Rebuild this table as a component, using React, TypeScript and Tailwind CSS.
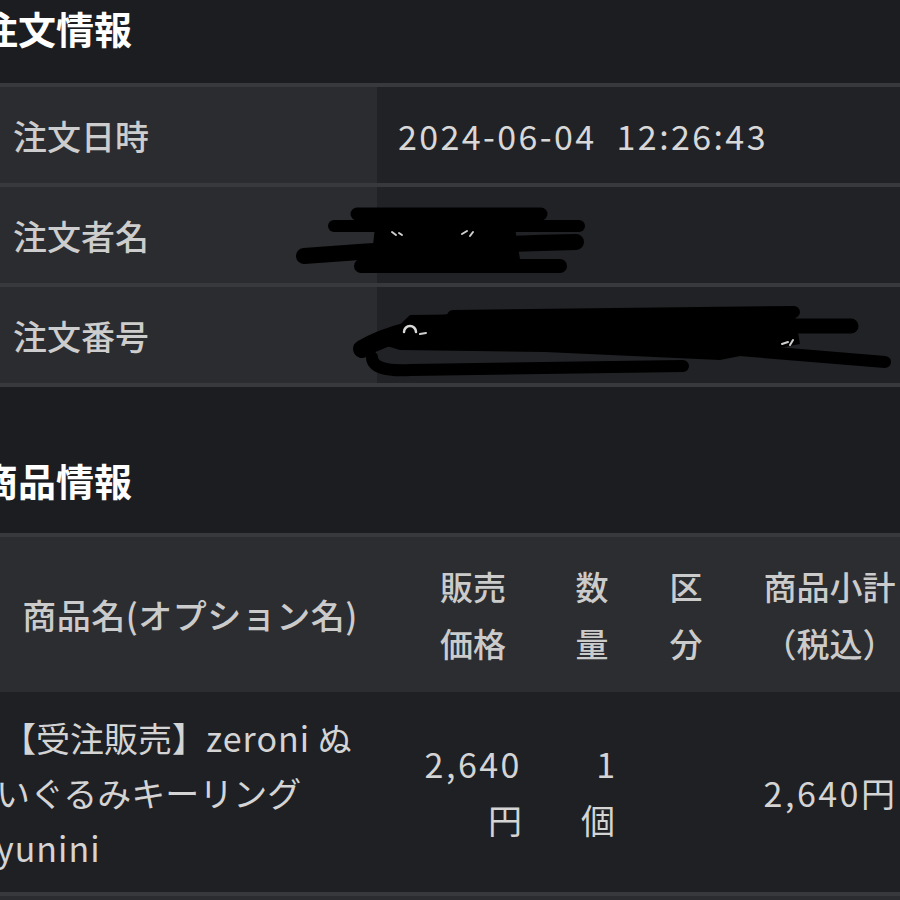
const orderRows = [
  { label: "注文日時", value: "2024-06-04\u00a0\u00a012:26:43" },
  { label: "注文者名", value: "" },
  { label: "注文番号", value: "" },
];

// black marker scribbles over the personal data
const Redactions = () => (
  <svg
    className="pointer-events-none absolute left-0 top-0 w-[945px] h-[304px]"
    viewBox="-20 83 945 304"
    fill="none"
    strokeLinecap="round"
    strokeLinejoin="round"
  >
    {/* row 2 */}
    <polygon points="377,205 512,205 522,268 370,268" fill="#000" />
    <path d="M357 210 L541 210" stroke="#000" strokeWidth="13" />
    <path d="M334 222 L579 222" stroke="#000" strokeWidth="12" />
    <path d="M304 252 Q440 241 576 238" stroke="#000" strokeWidth="16" />
    <path d="M361 262 L560 262" stroke="#000" strokeWidth="14" />
    <path d="M392 228 l4 3 M399 229 l3 2 M462 230 l5 -3 M470 232 l3 -4" stroke="#cfcfcf" strokeWidth="2" />
    {/* row 3 */}
    <polygon points="410,311 794,306 800,340 720,356 545,348 400,346 380,340" fill="#000" />
    <path d="M453 312 L794 308" stroke="#000" strokeWidth="12" />
    <path d="M740 322 L851 322" stroke="#000" strokeWidth="15" />
    <path d="M715 344 L885 358" stroke="#000" strokeWidth="12" />
    <path d="M362 345 Q400 323 470 317" stroke="#000" strokeWidth="18" />
    <path d="M372 353 Q372 368 410 366 L683 362" stroke="#000" strokeWidth="12" />
    <path d="M404 328 a6 6 0 0 1 12 0" stroke="#d8d8d8" strokeWidth="2.5" />
    <path d="M420 330 l6 -1 M782 340 l6 -2 M790 341 l3 -5" stroke="#cfcfcf" strokeWidth="2" />
  </svg>
);

export default function App() {
  return (
    <div className="w-[900px] h-[900px] overflow-hidden bg-[#1c1d21] font-['Noto_Sans_CJK_JP','Noto_Sans',sans-serif]">
      <div className="ml-[-20px] w-[945px]">
        <h2 className="h-[83px] pt-[9px] text-[38px] leading-[38px] font-bold text-white">注文情報</h2>

        <div className="relative border-t-4 border-[#38393d]">
          {orderRows.map((row) => (
            <div key={row.label} className="flex h-[100px] border-b-4 border-[#38393d]">
              <div className="flex w-[397px] items-center bg-[#2b2c2f] pl-[33px] text-[34px] font-medium text-[#cdcdcd]">
                {row.label}
              </div>
              <div className="flex flex-1 items-center bg-[#212226] pl-[21px] text-[34px] tracking-[2.4px] text-[#d8d8d8]">
                {row.value}
              </div>
            </div>
          ))}
          <Redactions />
        </div>

        <h2 className="h-[146px] pt-[74px] text-[38px] leading-[38px] font-bold text-white">商品情報</h2>

        <div className="border-t-4 border-[#38393d]">
          <div className="grid h-[155px] grid-cols-[420px_146px_92px_96px_191px] items-center bg-[#2c2d30] text-center text-[33px] leading-[57px] font-medium text-[#cbcbcb]">
            <div className="text-[34px] tracking-[0.5px]">商品名(オプション名)</div>
            <div>販売<br />価格</div>
            <div>数<br />量</div>
            <div>区<br />分</div>
            <div>商品小計<br />（税込）</div>
          </div>
          <div className="grid h-[204px] grid-cols-[420px_146px_92px_96px_191px] items-center border-b-4 border-[#38393d] bg-[#1f2024] text-[34px] leading-[55px] text-[#d4d4d4]">
            <div className="pl-[16px]">
              <span className="pl-[6px]">【受注販売】<span className="tracking-[1px]">zeroni</span> ぬ</span>
              <br />
              いぐるみキーリング
              <br />
              <span className="tracking-[1px]">yunini</span>
            </div>
            <div className="pr-[24px] text-right leading-[56px]">
              <span className="tracking-[2.5px]">2,640</span>
              <br />円
            </div>
            <div className="pr-[23px] text-right leading-[56px]">1<br />個</div>
            <div />
            <div className="pr-[30px] text-right">
              <span className="tracking-[2.5px]">2,640</span>円
            </div>
          </div>
          <div className="h-[20px] bg-[#2b2c2f]" />
        </div>
      </div>
    </div>
  );
}
